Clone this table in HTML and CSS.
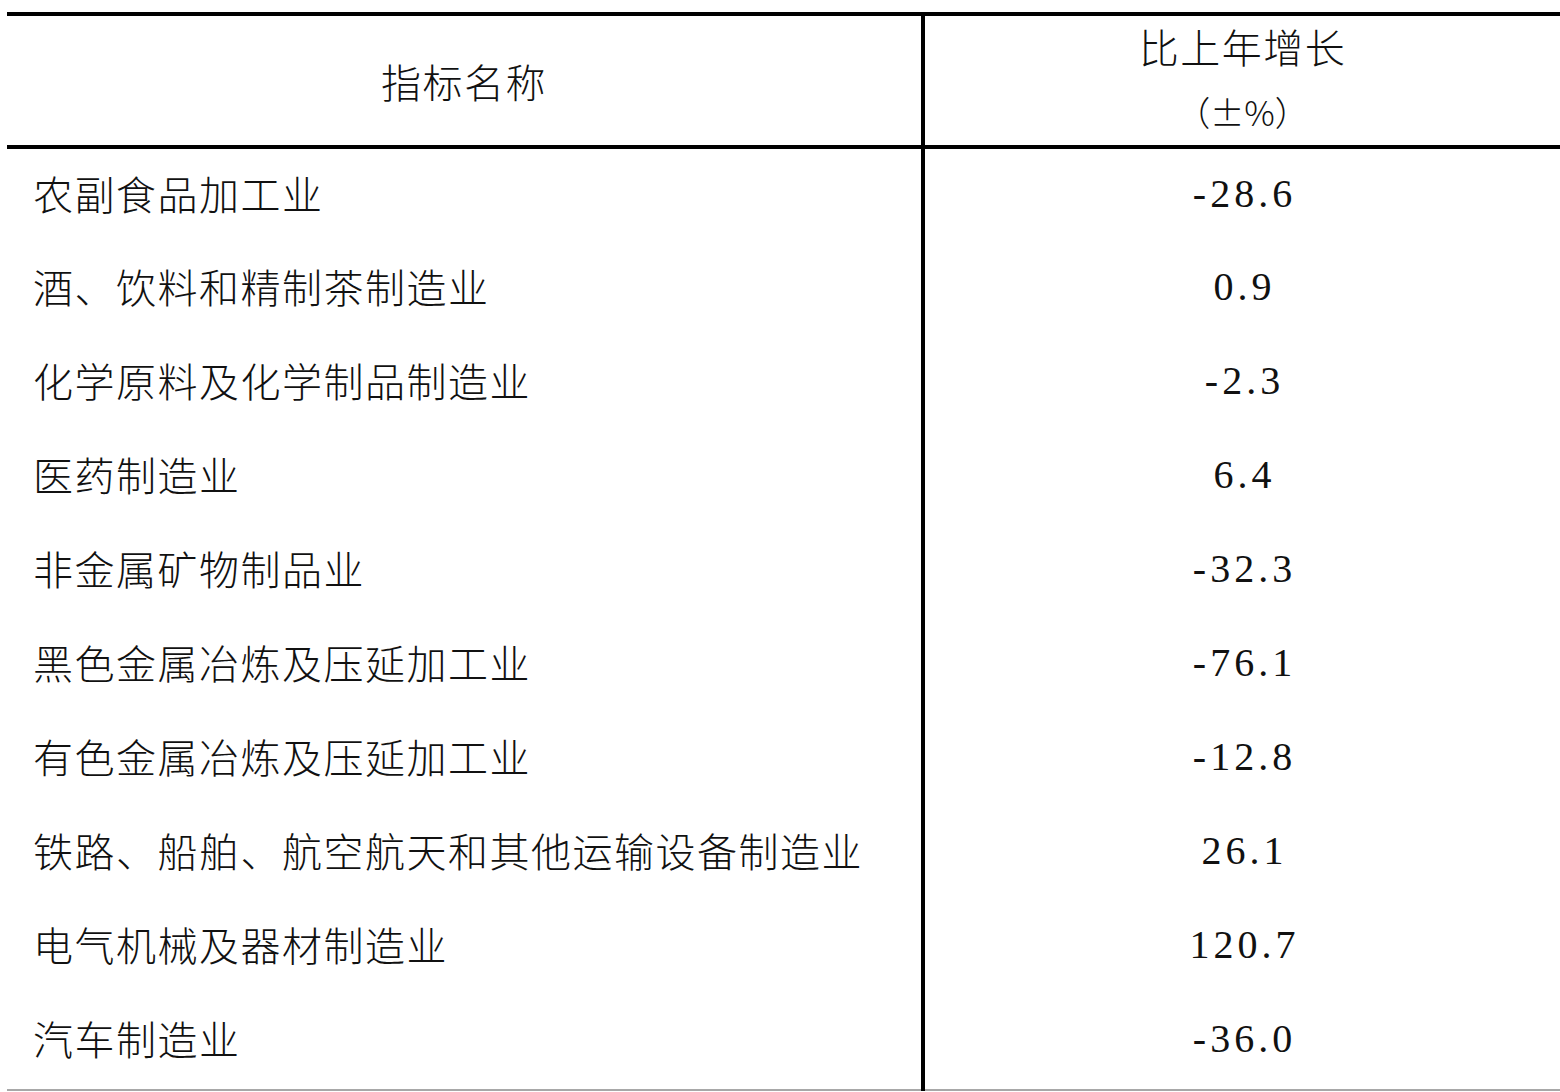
FILE: index.html
```html
<!DOCTYPE html>
<html lang="zh-CN">
<head>
<meta charset="utf-8">
<title>指标名称</title>
<link rel="stylesheet" href="styles.css">
</head>
<body>
<div class="page">
  <table class="stats">
    <thead>
      <tr>
        <th class="name-head">指标名称</th>
        <th class="val-head">
          <div class="head-main">比上年增长</div>
          <div class="head-sub">（±%）</div>
        </th>
      </tr>
    </thead>
    <tbody>
      <tr><td class="name">农副食品加工业</td><td class="val">-28.6</td></tr>
      <tr><td class="name">酒、饮料和精制茶制造业</td><td class="val">0.9</td></tr>
      <tr><td class="name">化学原料及化学制品制造业</td><td class="val">-2.3</td></tr>
      <tr><td class="name">医药制造业</td><td class="val">6.4</td></tr>
      <tr><td class="name">非金属矿物制品业</td><td class="val">-32.3</td></tr>
      <tr><td class="name">黑色金属冶炼及压延加工业</td><td class="val">-76.1</td></tr>
      <tr><td class="name">有色金属冶炼及压延加工业</td><td class="val">-12.8</td></tr>
      <tr><td class="name">铁路、船舶、航空航天和其他运输设备制造业</td><td class="val">26.1</td></tr>
      <tr><td class="name">电气机械及器材制造业</td><td class="val">120.7</td></tr>
      <tr><td class="name">汽车制造业</td><td class="val">-36.0</td></tr>
    </tbody>
  </table>
</div>
</body>
</html>
```

FILE: styles.css
```css
html, body {
  margin: 0;
  padding: 0;
  background: #fff;
}

.page {
  padding: 12px 0 0 7px;
}

.stats {
  width: 1553px;
  border-collapse: collapse;
  table-layout: fixed;
  color: #111;
  font-family: "Noto Sans CJK SC", "Liberation Serif", sans-serif;
  font-weight: 300;
}

.stats thead tr {
  border-top: 4px solid #000;
  border-bottom: 4px solid #000;
}

.stats th {
  font-weight: 300;
  height: 129px;
  padding: 0;
  vertical-align: middle;
}

.name-head {
  width: 914px;
  font-size: 40px;
  letter-spacing: 1.5px;
  text-align: center;
  border-right: 4px solid #000;
}

.val-head {
  text-align: center;
}

.head-main {
  font-size: 40px;
  letter-spacing: 1.5px;
  line-height: 50px;
  margin-top: -4px;
}

.head-sub {
  font-size: 34px;
  line-height: 50px;
  margin-top: 16px;
}

.stats td {
  box-sizing: border-box;
  height: 94px;
  padding: 0 0 4px 0;
  vertical-align: middle;
}

.stats tbody tr:last-child td {
  height: 97px;
  padding-bottom: 6px;
  border-bottom: 2px solid #a8a8a8;
}

.name {
  font-size: 40px;
  letter-spacing: 1.5px;
  padding-left: 26px !important;
  text-align: left;
  border-right: 4px solid #000;
  white-space: nowrap;
}

.val {
  font-family: "Liberation Serif", "Noto Sans CJK SC", serif;
  font-weight: 400;
  font-size: 40px;
  letter-spacing: 4px;
  text-align: center;
  padding-left: 4px !important;
}
```
